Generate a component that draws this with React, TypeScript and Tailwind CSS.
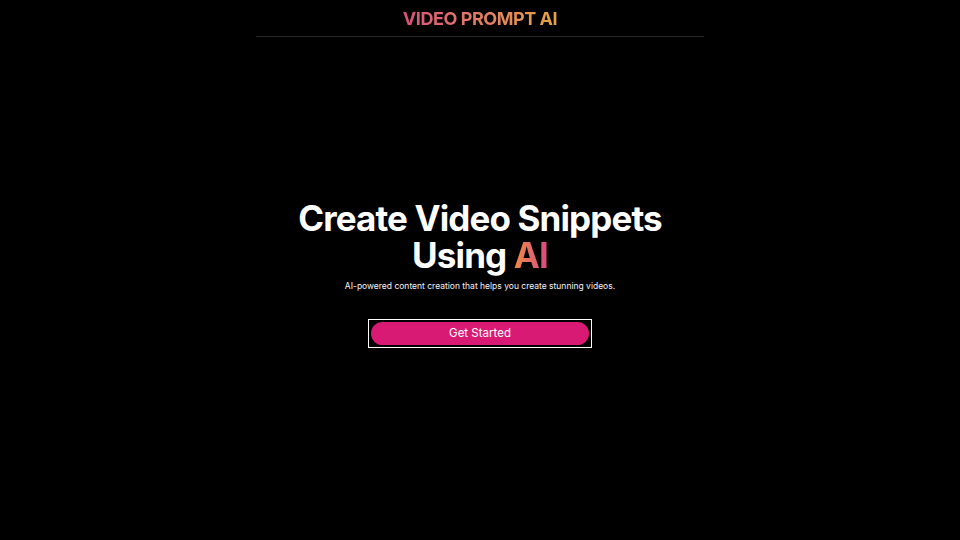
export default function App() {
  return (
    <div
      className="min-h-screen w-full bg-black text-white flex flex-col items-center"
      style={{ fontFamily: "Inter, 'Noto Sans', sans-serif" }}
    >
      {/* Header */}
      <header className="w-[448px] h-[37px] flex items-center justify-center border-b border-[#262626]">
        <h1 className="text-[18px] font-bold tracking-tight bg-gradient-to-r from-[#d9507a] to-[#e9a23b] bg-clip-text text-transparent">
          VIDEO PROMPT AI
        </h1>
      </header>

      {/* Hero */}
      <main className="flex flex-col items-center text-center pt-[163px]">
        <h2 className="text-[35px] leading-[37px] font-bold tracking-tight">
          Create Video Snippets
          <br />
          Using{" "}
          <span className="bg-gradient-to-r from-[#ed8a3a] to-[#d9467e] bg-clip-text text-transparent">
            AI
          </span>
        </h2>
        <p className="mt-[6px] text-[8.5px] leading-[12px] text-gray-100">
          AI-powered content creation that helps you create stunning videos.
        </p>
        <div className="mt-[27px] flex border border-white p-[2px]">
          <button className="w-[218px] h-[23px] rounded-full bg-[#d91a75] text-[11.5px] leading-none text-white flex items-center justify-center">
            Get Started
          </button>
        </div>
      </main>
    </div>
  );
}
